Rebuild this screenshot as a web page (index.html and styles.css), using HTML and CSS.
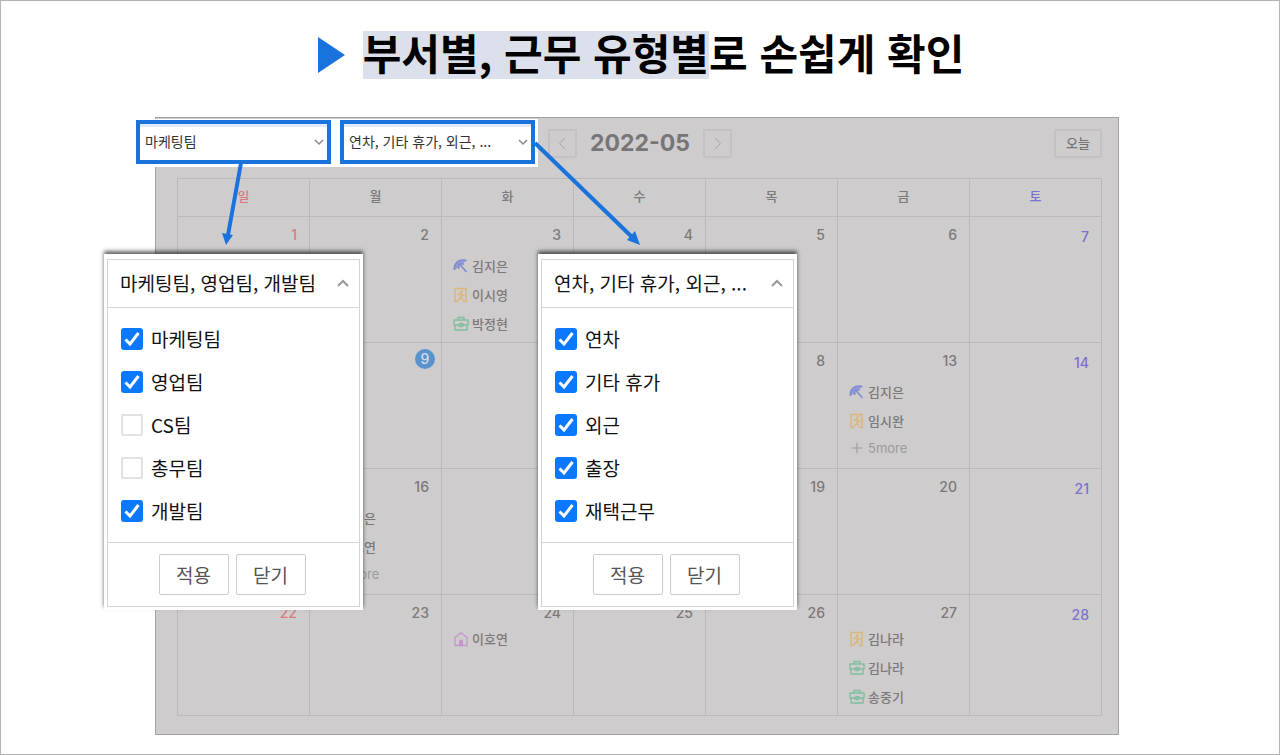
FILE: index.html
```html
<!DOCTYPE html>
<html lang="ko">
<head>
  <meta charset="UTF-8" />
  <meta name="viewport" content="width=device-width, initial-scale=1" />
  <title>부서별, 근무 유형별로 손쉽게 확인</title>
  <link rel="stylesheet" href="styles.css">
</head>
<body>

  <!-- shared icons -->
  <svg class="sprite" aria-hidden="true">
    <symbol id="umbrella" viewBox="0 0 16 16">
      <path d="M1.500 12C.5 5 6 .5 13.500 2.500L10 5.500 6.500 6 5 9.500Z" fill="currentColor" fill-opacity=".75"/>
      <path d="M1.500 12C.5 5 6 .5 13.500 2.500M6.500 6l7 8M6 6l5 0M6 6l-.5 5" fill="none" stroke="currentColor" stroke-width="1.700"/>
    </symbol>
    <symbol id="out" viewBox="0 0 16 16">
      <path d="M2 14.500V1.500h11v13M1 14.500h4M10.500 14.500H14" fill="none" stroke="currentColor" stroke-width="1.400"/>
      <circle cx="8.500" cy="4.500" r="1.300" fill="currentColor"/>
      <path d="M4.500 8l2-1.500h2l-.5 3.500-3.500 4M8 10l2.500 4M8.500 7l1 1.500h2" fill="none" stroke="currentColor" stroke-width="1.300"/>
    </symbol>
    <symbol id="bag" viewBox="0 0 16 16">
      <path d="M5 4V1.500h6V4M1 4h14v5H1zM2 9v5h12V9" fill="none" stroke="currentColor" stroke-width="1.400" stroke-linejoin="round"/>
      <ellipse cx="8" cy="9" rx="2.500" ry="1.500" fill="none" stroke="currentColor" stroke-width="1.300"/>
    </symbol>
    <symbol id="home" viewBox="0 0 16 16">
      <path d="M2 14.500V6.500L8 1.800l6 4.700v8z" fill="none" stroke="currentColor" stroke-width="1.300" stroke-linejoin="round"/>
      <path d="M6 14.500V10.500a2 2 0 0 1 4 0v4z" fill="currentColor"/>
    </symbol>
    <symbol id="plus" viewBox="0 0 16 16">
      <path d="M8 2.500v11M2.500 8h11" fill="none" stroke="currentColor" stroke-width="1"/>
    </symbol>
  </svg>

  <header class="page-title">
    <svg class="play" viewBox="0 0 27 36" aria-hidden="true"><path d="M0 0L27 18 0 36z" fill="#1a73dc"/></svg>
    <h1><mark>부서별, 근무 유형별</mark>로 손쉽게 확인</h1>
  </header>

  <main class="board">
    <div class="toolbar">
      <div class="filters">
        <select class="filter" aria-label="부서"><option>마케팅팀</option></select>
        <select class="filter" aria-label="근무 유형"><option>연차, 기타 휴가, 외근, ...</option></select>
      </div>
      <div class="month">
        <button class="month-btn" type="button" aria-label="이전 달"><svg viewBox="0 0 16 16"><path d="M10.500 2L5 8l5.500 6"/></svg></button>
        <h2>2022-05</h2>
        <button class="month-btn" type="button" aria-label="다음 달"><svg viewBox="0 0 16 16"><path d="M5.500 2L11 8l-5.500 6"/></svg></button>
      </div>
      <button class="today-btn" type="button">오늘</button>
    </div>

    <table class="calendar">
      <thead>
        <tr><th class="sun">일</th><th>월</th><th>화</th><th>수</th><th>목</th><th>금</th><th class="sat">토</th></tr>
      </thead>
      <tbody>
        <tr>
          <td class="sun"><span class="day">1</span></td>
          <td><span class="day">2</span></td>
          <td><span class="day">3</span>
            <ul class="events">
              <li><svg class="blue"><use href="#umbrella"/></svg>김지은</li>
              <li><svg class="orange"><use href="#out"/></svg>이시영</li>
              <li><svg class="green"><use href="#bag"/></svg>박정현</li>
            </ul>
          </td>
          <td><span class="day">4</span></td>
          <td><span class="day">5</span></td>
          <td><span class="day">6</span></td>
          <td class="sat"><span class="day">7</span></td>
        </tr>
        <tr>
          <td class="sun"></td>
          <td><span class="day current">9</span></td>
          <td></td>
          <td></td>
          <td><span class="day">8</span></td>
          <td><span class="day">13</span>
            <ul class="events">
              <li><svg class="blue"><use href="#umbrella"/></svg>김지은</li>
              <li><svg class="orange"><use href="#out"/></svg>임시완</li>
              <li class="more"><svg><use href="#plus"/></svg>5more</li>
            </ul>
          </td>
          <td class="sat"><span class="day">14</span></td>
        </tr>
        <tr>
          <td class="sun"></td>
          <td><span class="day">16</span>
            <ul class="events">
              <li><svg class="blue"><use href="#umbrella"/></svg>김지은</li>
              <li><svg class="orange"><use href="#out"/></svg>이호연</li>
              <li class="more"><svg><use href="#plus"/></svg>5more</li>
            </ul>
          </td>
          <td></td>
          <td></td>
          <td><span class="day">19</span></td>
          <td><span class="day">20</span></td>
          <td class="sat"><span class="day">21</span></td>
        </tr>
        <tr class="last">
          <td class="sun"><span class="day">22</span></td>
          <td><span class="day">23</span></td>
          <td><span class="day">24</span>
            <ul class="events">
              <li><svg class="pink"><use href="#home"/></svg>이호연</li>
            </ul>
          </td>
          <td><span class="day">25</span></td>
          <td><span class="day">26</span></td>
          <td><span class="day">27</span>
            <ul class="events">
              <li><svg class="orange"><use href="#out"/></svg>김나라</li>
              <li><svg class="green"><use href="#bag"/></svg>김나라</li>
              <li><svg class="green"><use href="#bag"/></svg>송중기</li>
            </ul>
          </td>
          <td class="sat"><span class="day">28</span></td>
        </tr>
      </tbody>
    </table>

    <!-- arrows from each filter to its open menu -->
    <svg class="arrows" viewBox="0 0 520 130" aria-hidden="true">
      <path d="M105 45L92 117M399 25L496 119" fill="none" stroke="#1a73dc" stroke-width="4"/>
      <path d="M90 127L86 115 97 117zM504 127L491 122 499 113z" fill="#1a73dc"/>
    </svg>

    <form class="menu menu-team">
      <button class="menu-head" type="button">마케팅팀, 영업팀, 개발팀<svg viewBox="0 0 14 14"><path d="M2 10l5-5 5 5"/></svg></button>
      <ul class="options">
        <li><label><input type="checkbox" checked>마케팅팀</label></li>
        <li><label><input type="checkbox" checked>영업팀</label></li>
        <li><label><input type="checkbox">CS팀</label></li>
        <li><label><input type="checkbox">총무팀</label></li>
        <li><label><input type="checkbox" checked>개발팀</label></li>
      </ul>
      <div class="actions"><button type="button">적용</button><button type="button">닫기</button></div>
    </form>

    <form class="menu menu-type">
      <button class="menu-head" type="button">연차, 기타 휴가, 외근, ...<svg viewBox="0 0 14 14"><path d="M2 10l5-5 5 5"/></svg></button>
      <ul class="options">
        <li><label><input type="checkbox" checked>연차</label></li>
        <li><label><input type="checkbox" checked>기타 휴가</label></li>
        <li><label><input type="checkbox" checked>외근</label></li>
        <li><label><input type="checkbox" checked>출장</label></li>
        <li><label><input type="checkbox" checked>재택근무</label></li>
      </ul>
      <div class="actions"><button type="button">적용</button><button type="button">닫기</button></div>
    </form>
  </main>

</body>
</html>
```
FILE: styles.css
```css
* { margin:0; padding:0; box-sizing:border-box; }
body { min-height:100vh; background:#fff; border:1px solid #b4b4b4; padding:30px 160px 19px 154px; font-family:"Noto Sans CJK KR", sans-serif; color:#111; }
button, select, input { font-family:inherit; }
ul { list-style:none; }
.sprite { display:none; }

/* Title */
.page-title { display:flex; justify-content:center; align-items:center; gap:18px; margin-bottom:38px; padding-left:8px; white-space:nowrap; }
.play { width:27px; height:36px; }
h1 { font-size:42px; line-height:42px; font-weight:700; color:#000; }
mark { display:inline-block; padding-bottom:6px; background:#dbe0ec; color:inherit; }

/* Board */
.board { position:relative; background:#cecccd; border:1px solid #a2a1a2; padding:1px 16px 18px 21px; }
.toolbar { display:flex; align-items:center; margin-bottom:11px; }
.filters { display:flex; gap:9px; margin-left:-41px; padding:1px 3px 3px 0; background:#fff; }
.filter { appearance:none; width:195px; height:44px; border:4px solid #1a73dc; padding:0 24px 3px 5px; font-size:14px; color:#333; box-shadow:inset 0 3px 0 #dfeaf8;
  background:#fff url("data:image/svg+xml,%3Csvg xmlns='http://www.w3.org/2000/svg' width='10' height='8'%3E%3Cpath d='M1 2l4 4 4-4' fill='none' stroke='%23888' stroke-width='1.500'/%3E%3C/svg%3E") no-repeat right 3px center; }
.month { display:flex; align-items:center; gap:13px; margin-left:10px; }
.month h2 { font:700 23px/28px Inter, sans-serif; color:#777576; }
.month-btn { display:flex; align-items:center; justify-content:center; width:29px; height:29px; }
.month-btn, .today-btn { background:none; border:2px solid #c3c1c2; border-radius:2px; color:#777576; }
.month-btn svg { width:15px; height:15px; fill:none; stroke:#a4a2a3; stroke-width:1; }
.today-btn { width:48px; height:29px; margin-left:auto; font-size:13px; font-weight:500; line-height:20px; }

/* Calendar */
.calendar { width:100%; table-layout:fixed; border-collapse:collapse; color:#7b797a; }
.calendar th, .calendar td { border:1px solid #bbb9ba; }
.calendar th { height:38px; padding-bottom:3px; font-size:13px; line-height:18px; font-weight:500; }
.calendar td { height:126px; vertical-align:top; padding:8px 12px 0 11px; }
.calendar .last td { height:121px; }
.day { display:block; text-align:right; font:500 14px/20px Inter, sans-serif; }
.calendar .sun { color:#d97b7d; }
.calendar .sat { color:#7a72cc; }
td.sat .day { padding-top:2px; }
.day.current { width:20px; margin:-2px -6px 0 auto; border-radius:50%; background:#5a93cb; color:#d5dde6; text-align:center; }
.events { margin-top:6px; }
.events li { display:flex; align-items:center; gap:3px; height:29px; font-size:13px; font-weight:500; white-space:nowrap; }
.events svg { width:16px; height:16px; flex:none; }
.last .events { margin-top:1px; }
.events .more { height:26px; color:#9c9a9b; font-family:Inter, sans-serif; font-weight:400; }
.blue { color:#808cd0; }
.orange { color:#dcb577; }
.green { color:#80bf9f; }
.pink { color:#c695cb; }

.arrows { position:absolute; left:-20px; top:0; width:520px; height:130px; pointer-events:none; }

/* Open menus */
.menu { position:absolute; top:136px; width:259px; padding:5px 3px 3px; background:#fff; box-shadow:0 -3px 4px rgba(0,0,0,.6); }
.menu-team { left:-52px; }
.menu-type { left:382px; }
.menu-head { display:flex; align-items:center; justify-content:space-between; width:100%; height:49px; padding:0 9px 2px 12px; background:#fff; border:1px solid #d4d4d4; font-size:19px; color:#111; white-space:nowrap; }
.menu-head svg { width:14px; height:14px; fill:none; stroke:#999; stroke-width:2; }
.options { display:grid; grid-auto-rows:1fr; height:235px; padding:9px 13px; border:1px solid #d4d4d4; border-top:0; }
.options li, .options label { display:flex; align-items:center; }
.options label { gap:8px; font-size:19px; line-height:28px; color:#111; }
.options input { appearance:none; width:22px; height:22px; border:2px solid #e2e2e2; border-radius:2px; background:#fff; }
.options input:checked { border:0; border-radius:3px; background:#0a78ff url("data:image/svg+xml,%3Csvg xmlns='http://www.w3.org/2000/svg' viewBox='0 0 22 22'%3E%3Cpath d='M4.500 11.500l4.500 4.500 8.500-11' fill='none' stroke='%23fff' stroke-width='3'/%3E%3C/svg%3E") center/contain no-repeat; }
.actions { display:flex; justify-content:center; align-items:center; gap:7px; height:64px; padding-right:3px; border:1px solid #d4d4d4; border-top:0; }
.actions button { width:70px; height:41px; background:#fff; border:1px solid #ccc; border-radius:2px; font-size:19px; color:#555; }
```
